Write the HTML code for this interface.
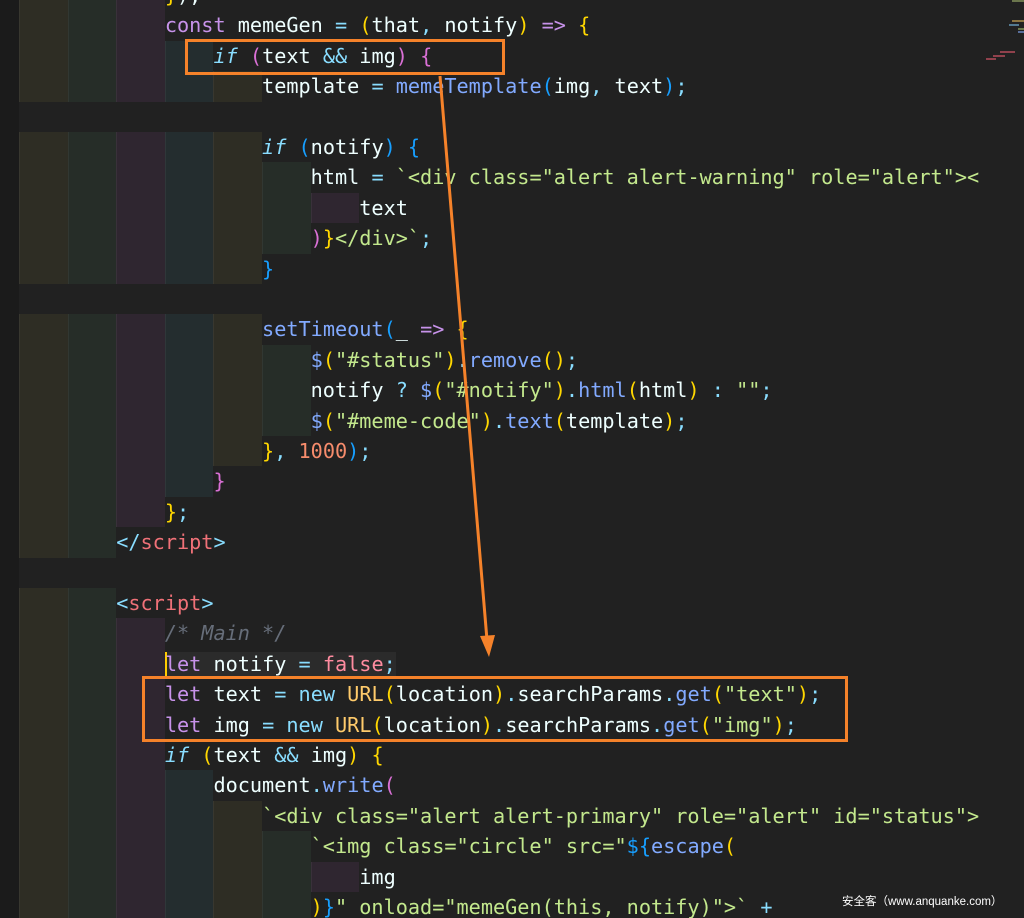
<!DOCTYPE html>
<html><head><meta charset="utf-8"><style>
html,body{margin:0;padding:0;background:#212121;width:1024px;height:918px;overflow:hidden;position:relative}
.g{position:absolute;left:0;top:0;width:19px;height:918px;background:#1b1b1b}
.w{position:absolute;left:0;top:1.5px;width:1024px;height:918px}
.l{position:absolute;left:19px;height:30.41px;line-height:30.41px;font-family:"DejaVu Sans Mono","Liberation Mono",monospace;font-size:20.2px;color:#eeffff;white-space:pre}
.c{display:inline-block;width:4ch;height:30.41px;vertical-align:top;box-shadow:inset 1px 0 0 rgba(255,255,255,0.05)}
.a{background:#2e2d24}.b{background:#262d28}.p{background:#2f2630}.t{background:#242d2f}
.k{color:#c792ea}.i{color:#89ddff;font-style:italic}.o{color:#89ddff}.f{color:#82aaff}.s{color:#c3e88d}.y{color:#ffd700}.m{color:#da70d6}.u{color:#179fff}.r{color:#f07178}.n{color:#f78c6c}.cl{color:#ffcb6b}.cm{color:#676e7a;font-style:italic}.fa{color:#ff8ca0}
.box{position:absolute;border:3px solid #f5822a;box-sizing:border-box}
.wm{position:absolute;left:842px;top:893px;font-family:"Liberation Sans","Noto Sans CJK SC",sans-serif;font-size:11.5px;color:#fff}
</style></head><body>
<div class="g"></div>
<div class="w">
<div class="l" style="top:-21.6px"><span class="c a"></span><span class="c b"></span><span class="c p"></span><span class="y">}</span>);</div>
<div class="l" style="top:8.8px"><span class="c a"></span><span class="c b"></span><span class="c p"></span><span class="k">const</span> memeGen <span class="o">=</span> <span class="y">(</span>that<span class="o">,</span> notify<span class="y">)</span> <span class="k">=&gt;</span> <span class="y">{</span></div>
<div class="l" style="top:39.2px"><span class="c a"></span><span class="c b"></span><span class="c p"></span><span class="c t"></span><span class="i">if</span> <span class="m">(</span>text <span class="o">&amp;&amp;</span> img<span class="m">)</span> <span class="m">{</span></div>
<div class="l" style="top:69.6px"><span class="c a"></span><span class="c b"></span><span class="c p"></span><span class="c t"></span><span class="c a"></span>template <span class="o">=</span> <span class="f">memeTemplate</span><span class="u">(</span>img<span class="o">,</span> text<span class="u">)</span><span class="o">;</span></div>
<div class="l" style="top:130.4px"><span class="c a"></span><span class="c b"></span><span class="c p"></span><span class="c t"></span><span class="c a"></span><span class="i">if</span> <span class="u">(</span>notify<span class="u">)</span> <span class="u">{</span></div>
<div class="l" style="top:160.8px"><span class="c a"></span><span class="c b"></span><span class="c p"></span><span class="c t"></span><span class="c a"></span><span class="c b"></span>html <span class="o">=</span> <span class="s">`&lt;div class="alert alert-warning" role="alert"&gt;&lt;</span></div>
<div class="l" style="top:191.2px"><span class="c a"></span><span class="c b"></span><span class="c p"></span><span class="c t"></span><span class="c a"></span><span class="c b"></span><span class="c p"></span>text</div>
<div class="l" style="top:221.6px"><span class="c a"></span><span class="c b"></span><span class="c p"></span><span class="c t"></span><span class="c a"></span><span class="c b"></span><span class="m">)</span><span class="y">}</span><span class="s">&lt;/div&gt;`</span><span class="o">;</span></div>
<div class="l" style="top:252px"><span class="c a"></span><span class="c b"></span><span class="c p"></span><span class="c t"></span><span class="c a"></span><span class="u">}</span></div>
<div class="l" style="top:312.9px"><span class="c a"></span><span class="c b"></span><span class="c p"></span><span class="c t"></span><span class="c a"></span><span class="f">setTimeout</span><span class="u">(</span>_ <span class="k">=&gt;</span> <span class="y">{</span></div>
<div class="l" style="top:343.3px"><span class="c a"></span><span class="c b"></span><span class="c p"></span><span class="c t"></span><span class="c a"></span><span class="c b"></span><span class="f">$</span><span class="y">(</span><span class="s">"#status"</span><span class="y">)</span><span class="o">.</span><span class="f">remove</span><span class="y">()</span><span class="o">;</span></div>
<div class="l" style="top:373.7px"><span class="c a"></span><span class="c b"></span><span class="c p"></span><span class="c t"></span><span class="c a"></span><span class="c b"></span>notify <span class="o">?</span> <span class="f">$</span><span class="y">(</span><span class="s">"#notify"</span><span class="y">)</span><span class="o">.</span><span class="f">html</span><span class="y">(</span>html<span class="y">)</span> <span class="o">:</span> <span class="s">""</span><span class="o">;</span></div>
<div class="l" style="top:404.1px"><span class="c a"></span><span class="c b"></span><span class="c p"></span><span class="c t"></span><span class="c a"></span><span class="c b"></span><span class="f">$</span><span class="y">(</span><span class="s">"#meme-code"</span><span class="y">)</span><span class="o">.</span><span class="f">text</span><span class="y">(</span>template<span class="y">)</span><span class="o">;</span></div>
<div class="l" style="top:434.5px"><span class="c a"></span><span class="c b"></span><span class="c p"></span><span class="c t"></span><span class="c a"></span><span class="y">}</span><span class="o">,</span> <span class="n">1000</span><span class="u">)</span><span class="o">;</span></div>
<div class="l" style="top:464.9px"><span class="c a"></span><span class="c b"></span><span class="c p"></span><span class="c t"></span><span class="m">}</span></div>
<div class="l" style="top:495.3px"><span class="c a"></span><span class="c b"></span><span class="c p"></span><span class="y">}</span><span class="o">;</span></div>
<div class="l" style="top:525.7px"><span class="c a"></span><span class="c b"></span><span class="o">&lt;/</span><span class="r">script</span><span class="o">&gt;</span></div>
<div class="l" style="top:586.5px"><span class="c a"></span><span class="c b"></span><span class="o">&lt;</span><span class="r">script</span><span class="o">&gt;</span></div>
<div class="l" style="top:616.9px"><span class="c a"></span><span class="c b"></span><span class="c p"></span><span class="cm">/* Main */</span></div>
<div class="l" style="top:647.3px"><span class="c a"></span><span class="c b"></span><span class="c p"></span><span style="background:#2b2b2b;box-shadow:inset 2px 0 0 #ffcc00"><span class="k">let</span> notify <span class="o">=</span> <span class="fa">false</span><span class="o">;</span></span></div>
<div class="l" style="top:677.7px"><span class="c a"></span><span class="c b"></span><span class="c p"></span><span class="k">let</span> text <span class="o">=</span> <span class="o">new</span> <span class="cl">URL</span><span class="y">(</span>location<span class="y">)</span><span class="o">.</span>searchParams<span class="o">.</span><span class="f">get</span><span class="y">(</span><span class="s">"text"</span><span class="y">)</span><span class="o">;</span></div>
<div class="l" style="top:708.1px"><span class="c a"></span><span class="c b"></span><span class="c p"></span><span class="k">let</span> img <span class="o">=</span> <span class="o">new</span> <span class="cl">URL</span><span class="y">(</span>location<span class="y">)</span><span class="o">.</span>searchParams<span class="o">.</span><span class="f">get</span><span class="y">(</span><span class="s">"img"</span><span class="y">)</span><span class="o">;</span></div>
<div class="l" style="top:738.5px"><span class="c a"></span><span class="c b"></span><span class="c p"></span><span class="i">if</span> <span class="y">(</span>text <span class="o">&amp;&amp;</span> img<span class="y">)</span> <span class="y">{</span></div>
<div class="l" style="top:768.9px"><span class="c a"></span><span class="c b"></span><span class="c p"></span><span class="c t"></span>document<span class="o">.</span><span class="f">write</span><span class="m">(</span></div>
<div class="l" style="top:799.3px"><span class="c a"></span><span class="c b"></span><span class="c p"></span><span class="c t"></span><span class="c a"></span><span class="s">`&lt;div class="alert alert-primary" role="alert" id="status"&gt;</span></div>
<div class="l" style="top:829.7px"><span class="c a"></span><span class="c b"></span><span class="c p"></span><span class="c t"></span><span class="c a"></span><span class="c b"></span><span class="s">`&lt;img class="circle" src="</span><span class="u">${</span><span class="f">escape</span><span class="y">(</span></div>
<div class="l" style="top:860.1px"><span class="c a"></span><span class="c b"></span><span class="c p"></span><span class="c t"></span><span class="c a"></span><span class="c b"></span><span class="c p"></span>img</div>
<div class="l" style="top:890.5px"><span class="c a"></span><span class="c b"></span><span class="c p"></span><span class="c t"></span><span class="c a"></span><span class="c b"></span><span class="y">)</span><span class="u">}</span><span class="s">" onload="memeGen(this, notify)"&gt;`</span> <span class="o">+</span></div>
</div>
<div class="box" style="left:185px;top:39px;width:320px;height:36px"></div>
<div class="box" style="left:142px;top:676px;width:706px;height:66px"></div>
<svg style="position:absolute;left:0;top:0" width="1024" height="918"><line x1="440" y1="76" x2="487" y2="640" stroke="#f5822a" stroke-width="3"/><path d="M480 636 L489 657 L495 635 Z" fill="#f5822a"/>
<g fill-opacity="0.7"><rect x="1012" y="0" width="12" height="2" fill="#8a9a60"/><rect x="1012" y="20" width="12" height="2" fill="#b89850"/><rect x="1009" y="24" width="10" height="2" fill="#6aa0c0"/><rect x="1018" y="28" width="6" height="2" fill="#8aa060"/><rect x="1018" y="31" width="6" height="2" fill="#7090d0"/><rect x="1000" y="51" width="15" height="2" fill="#c05060"/><rect x="993" y="55" width="12" height="2" fill="#c05060"/><rect x="986" y="58" width="10" height="2" fill="#c05060"/></g></svg>
<div class="wm">安全客（www.anquanke.com）</div>
</body></html>
